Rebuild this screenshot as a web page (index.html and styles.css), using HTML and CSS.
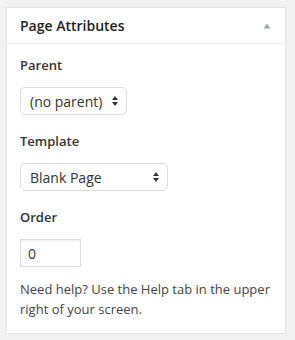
FILE: index.html
```html
<!DOCTYPE html>
<html lang="en">
<head>
    <meta charset="UTF-8">
    <title>Page Attributes</title>
    <link rel="stylesheet" href="styles.css">
</head>
<body>
    <div class="postbox">
        <div class="postbox-header">
            <h3>Page Attributes</h3>
            <svg class="toggle-arrow" width="8" height="6" viewBox="0 0 8 6"><path d="M0.5 5.5 L4 0.5 L7.5 5.5 Z" fill="#a0a5aa"/></svg>
        </div>
        <div class="inside">
            <p class="label">Parent</p>
            <div class="select select-parent">
                <span>(no parent)</span>
                <svg width="6" height="10" viewBox="0 0 6 10"><path d="M0 4 L3 0 L6 4 Z M0 6 L3 10 L6 6 Z" fill="#333"/></svg>
            </div>

            <p class="label">Template</p>
            <div class="select select-template">
                <span>Blank Page</span>
                <svg width="6" height="10" viewBox="0 0 6 10"><path d="M0 4 L3 0 L6 4 Z M0 6 L3 10 L6 6 Z" fill="#333"/></svg>
            </div>

            <p class="label">Order</p>
            <input class="order" type="text" value="0">

            <p class="help">Need help? Use the Help tab in the upper right of your screen.</p>
        </div>
    </div>
</body>
</html>
```

FILE: styles.css
```css
body {
    margin: 0;
    background: #f1f1f1;
    font-family: 'Open Sans', sans-serif;
    color: #444;
}
.postbox {
    width: 278px;
    margin: 7px 0 0 6px;
    background: #fff;
    border: 1px solid #e5e5e5;
    box-shadow: 0 1px 1px rgba(0, 0, 0, 0.04);
}
.postbox-header {
    display: flex;
    justify-content: space-between;
    align-items: center;
    padding: 0 14px 0 13px;
    border-bottom: 1px solid #eee;
}
.postbox-header h3 {
    margin: 0;
    font-size: 14px;
    font-weight: 600;
    line-height: 35px;
    color: #222;
}
.toggle-arrow {
    display: block;
}
.inside {
    padding: 11px 13px 14px 13px;
}
.label {
    margin: 0 0 12px;
    font-size: 13px;
    font-weight: 600;
    line-height: 20px;
    color: #333;
}
.select {
    display: flex;
    align-items: center;
    justify-content: space-between;
    box-sizing: border-box;
    height: 28px;
    padding: 0 8px 0 9px;
    margin-bottom: 16px;
    border: 1px solid #ddd;
    border-radius: 5px;
    font-size: 14px;
    color: #333;
}
.select svg {
    display: block;
}
.select-parent {
    width: 107px;
}
.select-template {
    width: 148px;
}
.order {
    display: block;
    box-sizing: border-box;
    width: 61px;
    height: 28px;
    margin: 0 0 12px;
    padding: 0 7px;
    border: 1px solid #ddd;
    box-shadow: inset 0 1px 2px rgba(0, 0, 0, 0.07);
    font-family: 'Open Sans', sans-serif;
    font-size: 14px;
    color: #333;
    outline: none;
}
.help {
    margin: 0;
    font-size: 13px;
    line-height: 20px;
    color: #444;
}
```
